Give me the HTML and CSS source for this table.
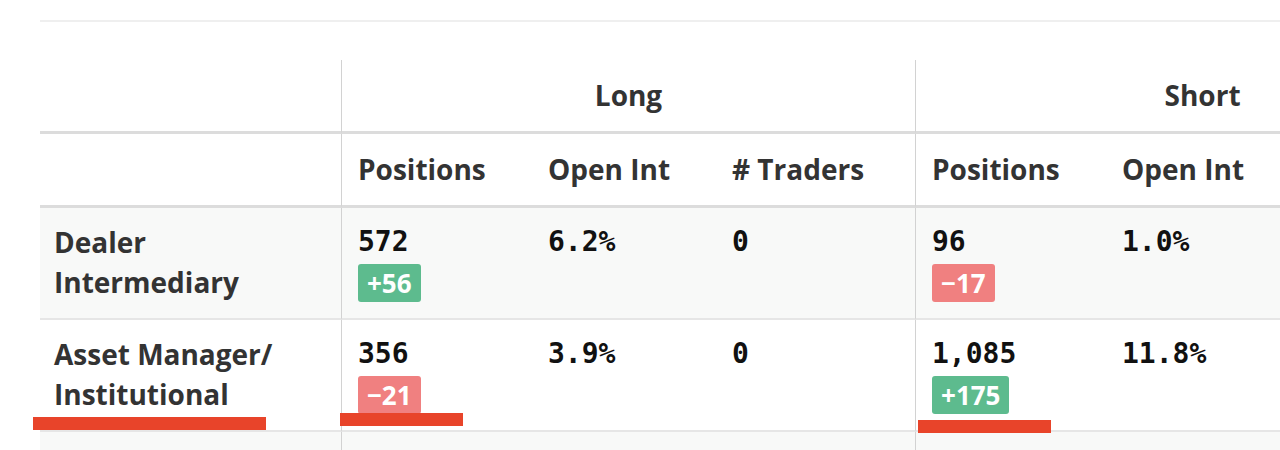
FILE: index.html
```html
<!DOCTYPE html>
<html lang="en">
<head>
<meta charset="utf-8">
<title>Commitments of Traders</title>
<link rel="stylesheet" href="styles.css">
</head>
<body>
<div class="page">
  <div class="rule"></div>
  <div class="table-wrap">
    <table class="cot">
      <colgroup>
        <col class="c-name">
        <col class="c-pos"><col class="c-oi"><col class="c-tr">
        <col class="c-pos"><col class="c-oi"><col class="c-tr">
      </colgroup>
      <thead>
        <tr class="group-row">
          <th class="name"></th>
          <th colspan="3" class="group end">Long</th>
          <th colspan="3" class="group end">Short</th>
        </tr>
        <tr class="sub-row">
          <th class="name"></th>
          <th>Positions</th>
          <th>Open Int</th>
          <th class="end"># Traders</th>
          <th>Positions</th>
          <th>Open Int</th>
          <th class="end"># Traders</th>
        </tr>
      </thead>
      <tbody>
        <tr class="row alt">
          <td class="name">Dealer<br>Intermediary</td>
          <td class="num">572<span class="badge up">+56</span></td>
          <td class="num">6.2%</td>
          <td class="num end">0</td>
          <td class="num">96<span class="badge down">−17</span></td>
          <td class="num">1.0%</td>
          <td class="num end">0</td>
        </tr>
        <tr class="row">
          <td class="name">Asset Manager/<br>Institutional</td>
          <td class="num">356<span class="badge down">−21</span></td>
          <td class="num">3.9%</td>
          <td class="num end">0</td>
          <td class="num">1,085<span class="badge up">+175</span></td>
          <td class="num">11.8%</td>
          <td class="num end">0</td>
        </tr>
        <tr class="row alt">
          <td class="name">Leveraged<br>Funds</td>
          <td class="num">1,204<span class="badge up">+32</span></td>
          <td class="num">13.1%</td>
          <td class="num end">0</td>
          <td class="num">2,310<span class="badge down">−48</span></td>
          <td class="num">25.1%</td>
          <td class="num end">0</td>
        </tr>
      </tbody>
    </table>
    <span class="mark mark-1"></span>
    <span class="mark mark-2"></span>
    <span class="mark mark-3"></span>
  </div>
</div>
</body>
</html>
```

FILE: styles.css
```css
html, body {
  margin: 0;
  padding: 0;
  background: #ffffff;
  overflow: hidden;
}

body {
  font-family: "Open Sans", "Noto Sans", sans-serif;
  color: #333333;
}

.page {
  padding-top: 20px;
  padding-left: 40px;
  width: 1600px;
}

.rule {
  height: 2px;
  background: #efefef;
}

.table-wrap {
  position: relative;
  margin-top: 38px;
}

.cot {
  border-collapse: separate;
  border-spacing: 0;
  table-layout: fixed;
  width: 1450px;
}

.c-name { width: 302px; }
.c-pos { width: 190px; }
.c-oi { width: 184px; }
.c-tr { width: 200px; }

.cot th,
.cot td {
  text-align: left;
  vertical-align: top;
  font-size: 28px;
  line-height: 40px;
  padding: 15px 16px 16px 16px;
  white-space: nowrap;
}

.cot th {
  font-weight: 700;
  color: #333333;
  border-bottom: 3px solid #dcdcdc;
}

.cot th.group {
  text-align: center;
}

.cot .name {
  padding-left: 14px;
  border-right: 1px solid #d2d2d2;
}

.cot .end {
  border-right: 1px solid #d2d2d2;
}

.cot td {
  padding-top: 14px;
  padding-bottom: 16px;
  height: 80px;
  border-bottom: 2px solid #e6e6e6;
}

.cot td.name {
  font-weight: 700;
  color: #333333;
}

.row.alt td {
  background: #f8f9f8;
}

.cot td.num {
  font-family: "DejaVu Sans Mono", "Liberation Mono", monospace;
  font-weight: 700;
  color: #111111;
  padding-left: 16px;
}

.badge {
  display: block;
  width: max-content;
  margin-top: 2px;
  padding: 0 9px;
  height: 38px;
  line-height: 38px;
  border-radius: 3px;
  font-family: "Open Sans", "Noto Sans", sans-serif;
  font-size: 26px;
  font-weight: 700;
  color: #ffffff;
}

.badge.up { background: #5dbb8e; }
.badge.down { background: #f08080; }

.mark {
  position: absolute;
  height: 13px;
  background: #e8442a;
}

.mark-1 { left: -7px; top: 357px; width: 233px; }
.mark-2 { left: 300px; top: 353px; width: 123px; }
.mark-3 { left: 878px; top: 360px; width: 133px; }
```
